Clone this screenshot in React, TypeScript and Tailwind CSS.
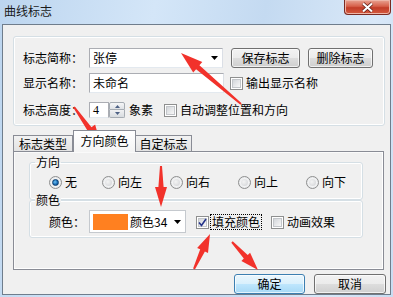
import React from "react";

function Check({ checked }: { checked?: boolean }) {
  return (
    <span className="relative inline-flex w-[13px] h-[13px] shrink-0 items-center justify-center border border-[#8e8f8f] bg-white">
      <span className="w-[9px] h-[9px] border border-[#c3c6ca] bg-[linear-gradient(135deg,#d3d6da,#f8f8f8)]" />
      {checked && (
        <svg className="absolute left-[1px] top-[1px]" width="9" height="9" viewBox="0 0 9 9">
          <path d="M1 4.5 L3.5 7.5 L8 1" fill="none" stroke="#24338a" strokeWidth="1.6" />
        </svg>
      )}
    </span>
  );
}

function Radio({ checked }: { checked?: boolean }) {
  return (
    <span className="inline-flex w-[13px] h-[13px] shrink-0 items-center justify-center rounded-full border border-[#8e8f8f] bg-[radial-gradient(circle,#ffffff_30%,#d6d8db_100%)]">
      <span
        className={
          checked
            ? "w-[7px] h-[7px] rounded-full bg-[radial-gradient(circle_at_40%_40%,#6fc3f4_0%,#1c6fb8_55%,#0b3f7a_100%)] border border-[#0c3e6f]"
            : "w-[7px] h-[7px] rounded-full bg-[radial-gradient(circle_at_40%_40%,#f4f4f4_0%,#cfd1d4_100%)]"
        }
      />
    </span>
  );
}

function DropArrow() {
  return (
    <svg width="7" height="4" viewBox="0 0 7 4" className="shrink-0">
      <path d="M0 0 H7 L3.5 4 Z" fill="#000" />
    </svg>
  );
}

function Btn({ children, w, def }: { children: React.ReactNode; w: string; def?: boolean }) {
  return (
    <div
      className={
        "flex h-[20px] items-center justify-center rounded-[3px] border shadow-[inset_0_0_0_1px_#ffffffb0] " +
        w +
        (def
          ? " border-[#3c7fb1] bg-[linear-gradient(#eaf6fd_0%,#d9f0fc_50%,#bee6fd_51%,#a7d9f5_100%)]"
          : " border-[#707070] bg-[linear-gradient(#f2f2f2_0%,#ebebeb_50%,#dddddd_51%,#cfcfcf_100%)]")
      }
    >
      {children}
    </div>
  );
}

function Arrow({ x1, y1, x2, y2, head = 18, hw = 7 }: { x1: number; y1: number; x2: number; y2: number; head?: number; hw?: number }) {
  const dx = x2 - x1;
  const dy = y2 - y1;
  const len = Math.hypot(dx, dy);
  const ux = dx / len;
  const uy = dy / len;
  const px = -uy;
  const py = ux;
  const bx = x2 - ux * head;
  const by = y2 - uy * head;
  const tw = 1;
  const sw = 2.6;
  const pts = [
    [x1 + px * tw, y1 + py * tw],
    [bx + px * sw, by + py * sw],
    [bx + px * hw, by + py * hw],
    [x2, y2],
    [bx - px * hw, by - py * hw],
    [bx - px * sw, by - py * sw],
    [x1 - px * tw, y1 - py * tw],
  ]
    .map((p) => p[0].toFixed(1) + "," + p[1].toFixed(1))
    .join(" ");
  return <polygon points={pts} fill="#f2322b" />;
}

export default function App() {
  return (
    <div className="relative w-[393px] h-[297px] overflow-hidden bg-[linear-gradient(100deg,#bcd5ef_0%,#d4e6f8_35%,#c4daf1_60%,#d9e8f8_85%,#c9dcf1_100%)] font-['Noto_Sans_CJK_SC','Liberation_Sans',sans-serif] text-[12px] leading-[14px] text-black">
      {/* title bar */}
      <div className="flex h-[24px] items-start justify-between">
        <div className="pl-[4px] pt-[4px] text-[12px] leading-[14px] text-[#1a1a1a]">曲线标志</div>
        <div className="mr-[2px] flex h-[15px] w-[47px] items-center justify-center rounded-b-[4px] border border-t-0 border-[#7a2a22] bg-[linear-gradient(#e8a493_0%,#d7604a_45%,#c23d28_55%,#d55a3f_100%)] shadow-[inset_0_0_0_1px_#eeb6a8]">
          <svg width="13" height="11" viewBox="0 0 13 11">
            <path d="M2 1.5 L11 9.5 M11 1.5 L2 9.5" stroke="#5a1a12" strokeWidth="3.6" />
            <path d="M2 1.5 L11 9.5 M11 1.5 L2 9.5" stroke="#ffffff" strokeWidth="2.2" />
          </svg>
        </div>
      </div>

      {/* client area */}
      <div className="ml-[2px] mr-[2px] flex h-[271px] flex-col border border-[#6f7d8c] bg-[#f0f0f0] pl-[10px] pr-[4px]">
        {/* top group */}
        <div className="mt-[11px] flex h-[90px] w-[372px] flex-col rounded-[3px] border border-[#d5dfe5] pl-[9px] pt-[11px] shadow-[inset_0_0_0_1px_#ffffff]">
          <div className="flex h-[20px] items-center">
            <div className="w-[66px]">标志简称：</div>
            <div className="flex h-[20px] w-[134px] items-center justify-between border border-[#abadb3] border-b-[#e3e9ef] border-r-[#dbdfe6] bg-white pl-[3px] pr-[4px]">
              <span>张停</span>
              <DropArrow />
            </div>
            <Btn w="ml-[8px] w-[69px]">保存标志</Btn>
            <Btn w="ml-[8px] w-[65px]">删除标志</Btn>
          </div>
          <div className="mt-[5px] flex h-[20px] items-center">
            <div className="w-[66px]">显示名称：</div>
            <div className="flex h-[20px] w-[135px] items-center border border-[#abadb3] border-b-[#e3e9ef] border-r-[#dbdfe6] bg-white pl-[3px]">
              未命名
            </div>
            <span className="ml-[6px]">
              <Check />
            </span>
            <span className="ml-[3px]">输出显示名称</span>
          </div>
          <div className="mt-[9px] flex h-[16px] items-center">
            <div className="w-[66px]">标志高度：</div>
            <div className="flex h-[16px] w-[20px] items-center border border-[#abadb3] border-b-[#e3e9ef] bg-white pl-[3px] font-['Liberation_Serif',serif]">
              4
            </div>
            <div className="flex h-[16px] w-[16px] flex-col">
              <div className="flex h-[8px] items-center justify-center rounded-t-[2px] border border-[#a6acb3] bg-[linear-gradient(#f6f7f8,#dfe2e6)]">
                <svg width="5" height="3" viewBox="0 0 5 3"><path d="M0 3 L2.5 0 L5 3 Z" fill="#4d6185" /></svg>
              </div>
              <div className="flex h-[8px] items-center justify-center rounded-b-[2px] border border-t-0 border-[#a6acb3] bg-[linear-gradient(#f0f1f3,#d8dce0)]">
                <svg width="5" height="3" viewBox="0 0 5 3"><path d="M0 0 L5 0 L2.5 3 Z" fill="#4d6185" /></svg>
              </div>
            </div>
            <span className="ml-[4px]">象素</span>
            <span className="ml-[11px]">
              <Check />
            </span>
            <span className="ml-[3px]">自动调整位置和方向</span>
          </div>
        </div>

        {/* tabs */}
        <div className="mt-[4px] flex h-[21px] items-end">
          <div className="flex h-[16px] w-[60px] items-center justify-center border border-b-0 border-[#898c95] bg-[linear-gradient(#f2f2f2,#e2e2e2)]">
            标志类型
          </div>
          <div className="relative z-10 -mb-[1px] flex h-[22px] w-[63px] items-center justify-center border border-b-0 border-[#898c95] bg-[linear-gradient(#ffffff,#f4f4f4)] pb-[2px]">
            方向颜色
          </div>
          <div className="flex h-[16px] w-[56px] items-center justify-center border border-b-0 border-l-0 border-[#898c95] bg-[linear-gradient(#f2f2f2,#e2e2e2)]">
            自定标志
          </div>
        </div>

        {/* tab panel */}
        <div className="flex h-[119px] w-[371px] flex-col border border-[#898c95] bg-[#f0f0f0] pl-[15px] pt-[3px] shadow-[inset_-1px_-1px_0_#ffffff,inset_1px_1px_0_#fafafa]">
          <fieldset className="h-[45px] w-[334px] rounded-[3px] border border-[#d5dfe5] shadow-[inset_0_0_0_1px_#ffffff]">
            <legend className="ml-[5px] px-[1px] leading-[14px]">方向</legend>
            <div className="mt-[6px] flex items-center pl-[19px]">
              <Radio checked />
              <span className="ml-[3px] w-[37px]">无</span>
              <Radio />
              <span className="ml-[3px] w-[52px]">向左</span>
              <Radio />
              <span className="ml-[3px] w-[52px]">向右</span>
              <Radio />
              <span className="ml-[3px] w-[52px]">向上</span>
              <Radio />
              <span className="ml-[3px]">向下</span>
            </div>
          </fieldset>
          <fieldset className="-mt-[7px] h-[45px] w-[334px] rounded-[3px] border border-[#d5dfe5] shadow-[inset_0_0_0_1px_#ffffff]">
            <legend className="relative ml-[5px] bg-[#f0f0f0] px-[1px] leading-[14px]">颜色</legend>
            <div className="mt-[3px] flex items-center pl-[19px]">
              <span className="w-[40px]">颜色：</span>
              <div className="flex h-[23px] w-[97px] items-center border border-[#c5c9ce] bg-white pl-[3px] pr-[4px]">
                <span className="h-[16px] w-[35px] bg-[#ff8020]" />
                <span className="ml-[2px] flex-1">颜色34</span>
                <DropArrow />
              </div>
              <span className="ml-[10px]">
                <Check checked />
              </span>
              <span className="ml-[2px] px-[1px] outline outline-1 outline-dotted outline-[#000]">填充颜色</span>
              <span className="ml-[10px]">
                <Check />
              </span>
              <span className="ml-[3px]">动画效果</span>
            </div>
          </fieldset>
        </div>

        {/* buttons */}
        <div className="mt-[4px] flex justify-end gap-[9px] pr-[0px]">
          <Btn w="w-[71px]" def>确定</Btn>
          <Btn w="w-[72px]">取消</Btn>
        </div>
      </div>

      {/* red annotation arrows */}
      <svg className="pointer-events-none absolute left-0 top-0" width="393" height="297" viewBox="0 0 393 297">
        <Arrow x1={241} y1={104} x2={181} y2={53} head={22} hw={7} />
        <Arrow x1={74} y1={107} x2={101} y2={145} head={20} hw={7} />
        <Arrow x1={161} y1={166} x2={161} y2={207} head={20} hw={6} />
        <Arrow x1={194} y1={269} x2={210} y2={234} head={18} hw={6} />
        <Arrow x1={232} y1={242} x2={258} y2={270} head={18} hw={6} />
      </svg>
    </div>
  );
}
